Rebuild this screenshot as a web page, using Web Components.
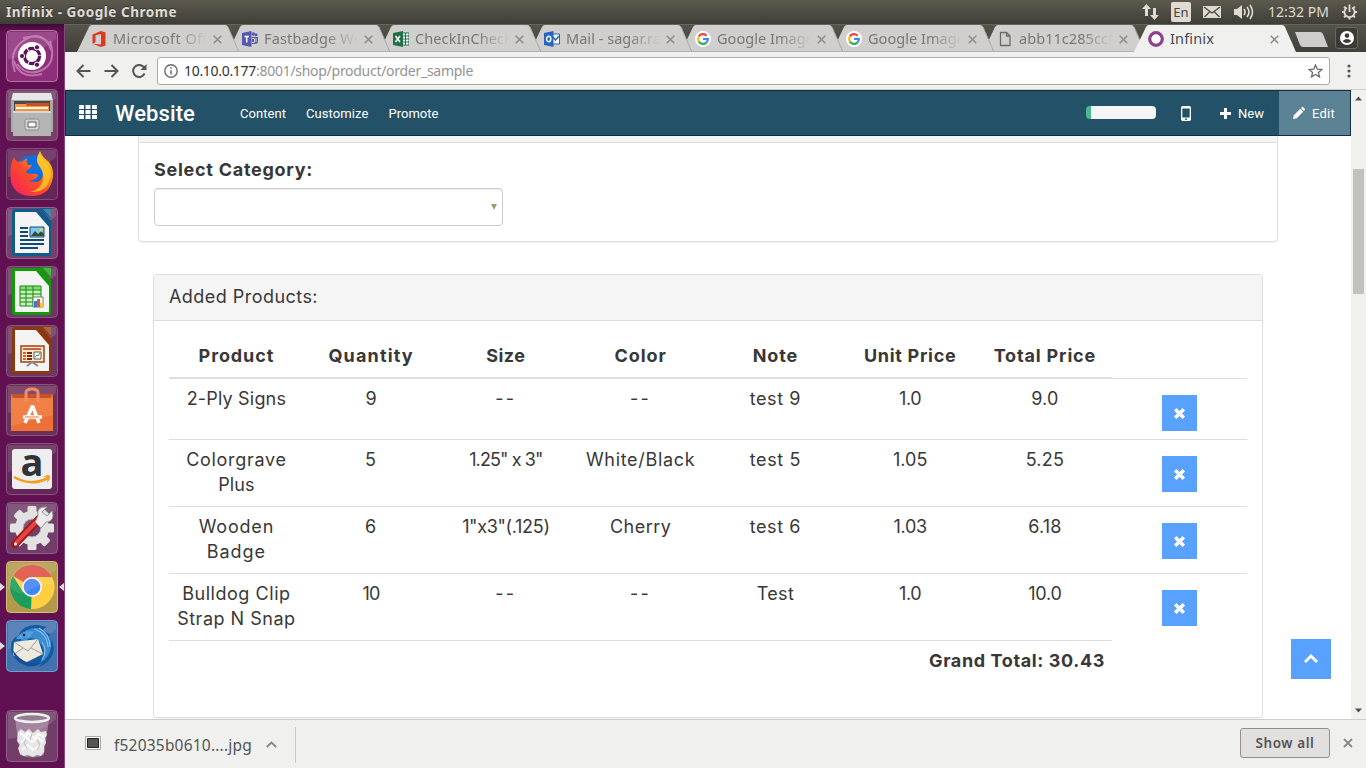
<!DOCTYPE html>
<html lang="en">
<head>
<meta charset="utf-8">
<title>Infinix - Google Chrome</title>
<style>
html,body{margin:0;padding:0;width:1366px;height:768px;overflow:hidden;background:#fff}
</style>
</head>
<body>
<desktop-screen></desktop-screen>
<script>
const make = (name, html, setup) => customElements.define(name, class extends HTMLElement {
  constructor() {
    super();
    const t = document.createElement('template');
    t.innerHTML = html;
    this.attachShadow({mode: 'open'}).append(t.content.cloneNode(true));
  }
  connectedCallback() { if (setup) setup(this, this.shadowRoot); }
});

make('desktop-screen', `
<style>
:host{display:flex;flex-direction:column;width:1366px;height:768px;overflow:hidden;font-family:"Noto Sans","Open Sans",sans-serif}
.body{display:flex;flex:1;min-height:0}
.win{flex:1;display:flex;flex-direction:column;min-width:0}
</style>
<system-bar></system-bar>
<div class="body">
  <app-launcher></app-launcher>
  <div class="win">
    <tab-strip></tab-strip>
    <nav-bar></nav-bar>
    <web-view></web-view>
    <download-shelf></download-shelf>
  </div>
</div>`);

make('system-bar', `
<style>
:host{display:flex;align-items:center;height:24px;box-sizing:border-box;padding:0 8px 0 6px;background:linear-gradient(#5b584d,#5a574d 8%,#403f39 95%,#3d3c36);color:#dfdbd2;font-size:14px;line-height:24px}
b{flex:1;font-size:13.5px;text-shadow:0 -1px #333}
.tray{display:flex;align-items:center}
svg{display:block}
.en{width:20px;height:20px;border-radius:2px;background:#dfdbd2;color:#45443d;line-height:21px;text-align:center;font-size:13px;margin:0 12px 0 11px}
</style>
<b><ui-fit w="171">Infinix - Google Chrome</ui-fit></b>
<div class="tray">
<svg width="19" height="18" viewBox="0 0 19 18" fill="#dfdbd2"><path d="M5.500 1l4.500 5H7v7H4V6H1zM13.500 17L9 12h3V5h3v7h3z"/></svg>
<span class="en">En</span>
<svg width="18" height="12"><path fill="#dfdbd2" d="M0 0h18v12H0z"/><path d="M1 1l8 6 8-6M1.500 11l5-5M16.500 11l-5-5" fill="none" stroke="#45443d" stroke-width="1.200"/></svg>
<svg style="margin-left:13px;margin-right:13px" width="21" height="16" viewBox="0 0 21 16"><path fill="#dfdbd2" d="M0 5h3l5-4v14l-5-4H0z"/><path d="M10 5q2 3 0 6M13 3q4 5 0 10M16 1q5 7 0 14" fill="none" stroke="#dfdbd2" stroke-width="1.600"/></svg>
<ui-fit w="61">12:32 PM</ui-fit>
<svg style="margin-left:12px" width="17" height="18" viewBox="-9 -9 18 18" fill="none" stroke="#dfdbd2"><path stroke-width="1.900" d="M-2.800-4.600A5.400 5.400 0 1 0 2.800-4.600M0-8V0"/><path stroke-width="2.200" d="M-4-4l-1.700-1.700M4-4l1.700-1.700M-5.500 0h-2.500M5.500 0h2.500M-4 4l-1.700 1.700M4 4l1.700 1.700M0 5.500v2.500"/></svg>
</div>`);

const gloss = (c1, c2) => `<rect x=".5" y=".5" width="51" height="51" rx="4" fill="${c1}" stroke="${c2}"/><path d="M2 2h48v7Q34 24 2 29z" fill="#fff" opacity=".13"/>`;
const doc = c => `<path d="M9 2h26l10 12v32q0 3-3 3H9q-3 0-3-3V5q0-3 3-3z" fill="${c}"/><path d="M9 5h21l13 15v26H9z" fill="#f4f4f4"/><path d="M34 1h11v11z" fill="${c}"/><path d="M37 2h8v9z" fill="#fff" opacity=".25"/>`;
const gear = (() => { let s = ''; for (let i = 0; i < 8; i++) s += `<rect x="-4.500" y="-22" width="9" height="9" rx="1.500" transform="rotate(${i * 45})"/>`; return s; })();
const apps = {
dash: gloss('#8e2f7a', '#b571a8') + `<path d="M9 42Q2 22 17 11T42 13M44 11q7 22-8 29T11 34M17 8q24-6 28 12M36 44Q14 50 8 31" fill="none" stroke="#d8a5cd" stroke-width="2" opacity=".6"/><circle cx="26" cy="26" r="14" fill="#fff"/><circle cx="26" cy="26" r="7.600" fill="none" stroke="#5e1352" stroke-width="3.200" stroke-dasharray="14.900 1"/><g fill="#5e1352" stroke="#fff" stroke-width="1"><circle cx="16" cy="26" r="2.600"/><circle cx="31" cy="17.300" r="2.600"/><circle cx="31" cy="34.700" r="2.600"/></g>`,
files: gloss('#744068', '#8c5b81') + `<path d="M7 4h38l2 8v31H5V12z" fill="#a9a9a9"/><path d="M7 4h38l1.500 7h-41z" fill="#e6e6e6"/><path d="M8 12h36v12H8z" fill="#4a4a4a"/><path d="M20 14h23v6H20z" fill="#c84f22"/><path d="M9 15h11l1 2h22v4H9z" fill="#f79540"/><path d="M10 18h32v2H10z" fill="#fff4dc"/><path d="M9 21h34v3H9z" fill="#ee9440"/><path d="M7 22h38v25H7z" fill="#b4b4b4"/><path d="M7 22h38v2H7z" fill="#d8d8d8"/><rect x="19" y="30" width="14" height="11" rx="2" fill="#d5d5d5" stroke="#8d8d8d"/><path d="M22 33h8v5h-8z" fill="#fff" stroke="#555"/>`,
firefox: gloss('#65265a', '#81507a') + `<defs><linearGradient id="ff" x1="0" y1="1" x2="1" y2="0"><stop stop-color="#f21c68"/><stop offset=".45" stop-color="#ff4b28"/><stop offset=".75" stop-color="#ffa11c"/><stop offset="1" stop-color="#ffee28"/></linearGradient></defs><circle cx="26" cy="24" r="17" fill="#136fe0"/><path d="M14 27q7 8 14 8l8-5v7l-12 7-10-8z" fill="#143b9c"/><path d="M8 9q1 4 5 5 5-1 8-4-1 5 1 7h4q-1 3-6 6 0 3 6 3 5-1 6 1-2 6-10 5 9 5 14-2 3-6-2-11-6-6 0-16 2 6 9 11 5 7 4 15-3 19-21 19Q9 48 5 34 3 18 8 9z" fill="url(#ff)"/><path d="M34 4q-6 8 0 15 8 13-3 22-3 2-7 3 16 1 20-13 2-9-3-15-6-6-7-12z" fill="#ffd02a" opacity=".75"/>`,
writer: gloss('#74406c', '#90658a') + doc('#0d5c8e') + `<g stroke="#104b74" stroke-width="2"><path d="M14 21h8M14 25h8M14 29h8M14 33h24M14 37h24M14 41h18"/></g><path d="M24 20h14v10H24z" fill="#7dc8f2" stroke="#104b74"/><path d="M25 29l4-5 3 3 3-3 3 3v2z" fill="#354d32"/><circle cx="35" cy="23" r="1.500" fill="#fad72e"/>`,
calc: gloss('#6b3863', '#86577d') + doc('#129a0b') + `<path d="M14 20h21v20H14z" fill="#c9f3bd"/><path d="M14 20h21v4H14z" fill="#7de275"/><path d="M14 20h21v20H14zM14 24h21M14 28h21M14 32h21M14 36h21M20 20v20M27 20v20" fill="none" stroke="#17860f"/><path d="M27 31h10v10H27z" fill="#fff" stroke="#777"/><path d="M28 35h3v6h-3z" fill="#2a80d4"/><path d="M31 33h3v8h-3z" fill="#e2572d"/><path d="M34 37h3v4h-3z" fill="#f7c72b"/>`,
impress: gloss('#6b3863', '#86577d') + doc('#8d370d') + `<path d="M15 21h23v16H15z" fill="#ffe8d4" stroke="#9d4111" stroke-width="1.500"/><path d="M17 24h18" stroke="#d5602a" stroke-width="2"/><path d="M17 28h3M17 31h3M17 34h3" stroke="#d5602a" stroke-width="2"/><path d="M21 28h5M21 31h5M21 34h5" stroke="#763008" stroke-width="2"/><path d="M28 27h7v7h-7z" fill="#fff" stroke="#555"/><path d="M29 32l2-2 1 1 2-3" fill="none" stroke="#27a829"/><path d="M21 41l5-4 6 4" fill="none" stroke="#888" stroke-width="2"/>`,
store: gloss('#6b3159', '#86577d') + `<path d="M5 10l5 3h32l5-3v37H5z" fill="#ed7136"/><path d="M5 10h42l-3 4H8z" fill="#c8522b"/><path d="M5 14h42v17L5 42z" fill="#f48b51" opacity=".6"/><path d="M20 18V9q0-4 6-4t6 4v9" fill="none" stroke="#f08e67" stroke-width="3"/><path d="M19 39l7-16h1l6 16M17 33h19" fill="none" stroke="#fff" stroke-width="3.500"/><path d="M19 33h14" stroke="#ed7136"/>`,
amazon: gloss('#65265a', '#86577d') + `<rect x="6" y="6" width="40" height="40" rx="3" fill="#eee"/><text x="26" y="33" text-anchor="middle" font-family="Open Sans" font-weight="700" font-size="38" fill="#30343a">a</text><path d="M8 34q17 10 34 1" fill="none" stroke="#f79b1f" stroke-width="2.600"/><path d="M37 34q7-4 7 0 0 3-3 6 1-5 0-6z" fill="#f79b1f"/>`,
settings: gloss('#703e68', '#8f6288') + `<g transform="translate(26 26)"><g fill="#e2e2e2">${gear}</g><circle r="13" fill="none" stroke="#e2e2e2" stroke-width="8"/><circle r="9" fill="none" stroke="#bbb"/></g><path d="M9 42L35 15" stroke="#a81717" stroke-width="8" stroke-linecap="round"/><path d="M10 41L29 21" stroke="#e34444" stroke-width="4" stroke-linecap="round"/><path d="M29 20l6 6 5-6q6 0 7-6l-1-5-5 5-5-4 5-5q-11-1-9 9z" fill="#ececec" stroke="#999"/><circle cx="9.500" cy="42" r="1.500" fill="#fff"/>`,
chrome: gloss('#b39a4b', '#d2bf81') + `<circle cx="26" cy="26" r="22" fill="#ffcf42"/><path d="M26 26L7 15A22 22 0 0 1 46 16H26z" fill="#de5246"/><path d="M26 26l-9 5L7 15a22 22 0 0 0 18 33z" fill="#1c9d5b"/><path d="M26 16h20a22 22 0 0 1-21 32l10-17z" fill="#ffcf42"/><circle cx="26" cy="26" r="10" fill="#f3f3f3"/><circle cx="26" cy="26" r="8.300" fill="#4286f4"/><path d="M4 26A22 22 0 0 1 48 23Q30 23 22 30T4 26z" fill="#fff" opacity=".1"/>`,
mail: gloss('#4272b0', '#789cc9') + `<path d="M12 16Q17 4 32 5l9 2q-3 1-4 3l8 5-3 1q5 5 6 13-2 13-15 18l3-4q-10 6-18 2Q4 39 5 25q1-7 7-9z" fill="#15599f"/><path d="M12 17q9-10 21-9 9 4 12 14 1 14-11 21 6-9 3-16-5-8-11-9-5 0-6 4l-7 2 3-6q-3 0-4-1z" fill="#3a8bcf"/><path d="M8 22l24-3 5 15-18 9L7 35z" fill="#eee9df"/><path d="M8 22l14 9 10-12M7 35l10-7M37 34l-12-6" fill="none" stroke="#a69e96"/><path d="M28 9q13 4 14 18M33 8q11 6 11 19M36 22q6 8 0 18" fill="none" stroke="#82bfe9" stroke-width="1.200"/><path d="M10 19q5-8 14-8l4 1-5 6q-4-2-7 1z" fill="#51a0dd"/><circle cx="18" cy="15" r="1.300" fill="#151b2b"/><path d="M6 29q3 13 16 17 8 0 12-3-17 3-28-14z" fill="#174e8f"/>`,
trash: gloss('#703e68', '#8f6288') + `<path d="M9 9l5 36q12 5 24 0l5-36z" fill="#c7b4c5" opacity=".5"/><path d="M12 22l3-3 4 3 4-3 4 4 5-4 3 3 5-1 1 4-2 3 1 5-2 3v6l-3 4-4-1-4 2-5-2-4 1-4-2-2-6 2-3-3-4z" fill="#e6e6e6"/><path d="M14 23l5 4 3-4 6 5 5-4 5 3M15 32l6-4 5 4 6-4 5 4M16 40l6-5 5 5 8-5" fill="none" stroke="#fff" stroke-width="2"/><path d="M20 29l-2 4 3 5M31 29l3 6-3 5M26 24l-2 6" fill="none" stroke="#bbb" stroke-width="1"/><ellipse cx="26" cy="8" rx="17" ry="4" fill="#917e92" stroke="#f0f0f0" stroke-width="2.500"/>`
};
make('launcher-tile', `<style>:host{display:flex;align-items:center;height:52px;width:65px;position:relative}svg.i{margin-left:6px;overflow:visible;display:block}.l,.r{position:absolute;top:22px;width:0;height:0;border:4px solid transparent}.l{left:0;border-left:5px solid #ddd;border-right:0}.r{right:1px;border-right:5px solid #ddd;border-left:0}</style><svg class="i" width="52" height="52" viewBox="0 0 52 52"></svg>`, (h, r) => {
  r.querySelector('svg').innerHTML = apps[h.getAttribute('app')];
  for (const side of (h.getAttribute('marks') || '')) { const s = document.createElement('span'); s.className = side; r.append(s); }
});
make('app-launcher', `<style>:host{display:flex;flex-direction:column;gap:7px;width:65px;box-sizing:border-box;padding:6px 0;background:linear-gradient(#3d0b35,#611152 8px,#611152);box-shadow:inset -1px 0 #86457c}.t{margin-top:auto}</style>
${Object.keys(apps).map(a => `<launcher-tile app="${a}" ${a === 'chrome' ? 'marks="lr"' : a === 'mail' ? 'marks="l"' : ''} ${a === 'trash' ? 'class="t"' : ''}></launcher-tile>`).join('')}`);

make('browser-tab', `
<style>
:host{display:flex;position:relative;width:162px;height:28px;margin-right:-11px;flex:none;color:#777;font-size:14.500px;align-items:center;box-sizing:border-box;padding:2px 0 0 14px}
.bg{position:absolute;inset:0}
.ic,.tx,.x{position:relative;display:block}
.ic{width:16px;height:16px}
.tx{margin-left:6px;width:94px;white-space:nowrap;overflow:hidden;line-height:24px;margin-top:-2px;-webkit-mask:linear-gradient(90deg,#000 66%,transparent)}
:host([active]){color:#46494f}
:host([active]) .tx{-webkit-mask:none}
.x{margin-left:6px}
</style>
<svg class="bg" width="162" height="28"><path id="p" d="M0 28L12 3q1-2 3-2h133q2 0 3 2l11 25z" fill="#d0cfce"/><path id="s" d="M151 3l11 25" stroke="#aaa9a7" fill="none"/><path id="b" d="M0 27.500h162" stroke="#b2b1af"/></svg>
<span class="ic"><slot name="icon"></slot></span><span class="tx"><slot></slot></span>
<svg class="x" width="9" height="9"><path d="M.7.700l7.600 7.600M8.300.700L.700 8.300" stroke="#8b8b8b" stroke-width="1.500"/></svg>`, (h, r) => {
  if (h.hasAttribute('active')) { r.getElementById('p').setAttribute('fill', '#f0f0ef'); r.getElementById('s').remove(); r.getElementById('b').remove(); }
});
const svg16 = s => `<svg slot="icon" width="16" height="16" viewBox="0 0 16 16" style="display:block">${s}</svg>`;
const G = svg16(`<circle cx="8" cy="8" r="8" fill="#fff"/><g fill="none" stroke-width="2.200"><path d="M11.600 4.700A4.900 4.900 0 0 0 3.800 5.500" stroke="#ea4335"/><path d="M3.800 5.500a4.900 4.900 0 0 0 0 5" stroke="#fbbc05"/><path d="M3.800 10.500a4.900 4.900 0 0 0 7.600 1.100" stroke="#34a853"/><path d="M11.400 11.600A4.900 4.900 0 0 0 12.900 8H8" stroke="#4285f4"/></g>`);
const tabs = [
[svg16('<path d="M1.500 3.500L10 0l4.500 1.500v13L10 16l-8.500-3.300L10 13.500V3L4.500 4.200v7l-3 1.500z" fill="#d8391f"/>'), 'Microsoft Off', 95],
[svg16('<path d="M0 2l9.500-2v16L0 14z" fill="#5558af"/><path d="M2.500 5.500h4.500M4.700 5.500v6" stroke="#fff" stroke-width="1.500"/><circle cx="14" cy="3.800" r="1.500" fill="#5558af"/><circle cx="11.300" cy="3" r="1.700" fill="#5558af"/><path d="M10 6h6v4q0 3-3 3h-3z" fill="#5558af"/><path d="M10 7.500h2.500v4H10M14 7v4" fill="none" stroke="#d0cfce"/>'), 'Fastbadge We', 98],
[svg16('<path d="M9 2h7v12H9z" fill="#fff" stroke="#1f7244"/><path d="M9 5h7M9 8h7M9 11h7M12.500 2v12" stroke="#1f7244"/><path d="M0 2l10-2v16L0 14z" fill="#1f7244"/><path d="M2.500 5l4.500 6M7 5l-4.500 6" stroke="#fff" stroke-width="1.500"/>'), 'CheckInCheck', 97],
[svg16('<path d="M8 3h7.500v10H8z" fill="#fff" stroke="#2567bf"/><path d="M9 6l2.500 3L15 5" fill="none" stroke="#2567bf" stroke-width="1.500"/><path d="M0 2l9.500-2v16L0 14z" fill="#2567bf"/><ellipse cx="4.700" cy="8" rx="2.100" ry="2.700" fill="none" stroke="#fff" stroke-width="1.500"/>'), 'Mail - sagar.ra', 95],
[G, 'Google Image', 97], [G, 'Google Image', 97],
[svg16('<path d="M3.500 1.500h6l3.500 3.500v9.500H3.500zM9.500 1.500V5H13" fill="none" stroke="#6a6a6a" stroke-width="1.300"/>'), 'abb11c285ccf', 94]];
make('tab-strip', `
<style>:host{display:flex;height:28px;box-sizing:border-box;padding-left:12px;background:linear-gradient(#67655a 0 1px,#55534a 1px,#403f39);align-items:flex-start}
.nt{margin:8px 0 0 9px;flex:none}.u{margin:3px 0 0 7px;width:23px;height:22px;box-sizing:border-box;border:1px solid #69675e;border-radius:3px;background:#3b3a34;display:grid;place-items:center}</style>
${tabs.map((t, i) => `<browser-tab style="z-index:${8 - i}">${t[0]}<ui-fit w="${t[2]}">${t[1]}</ui-fit></browser-tab>`).join('')}
<browser-tab active style="z-index:9">${svg16('<circle cx="8" cy="8" r="6.300" fill="#fff" stroke="#8f408b" stroke-width="3.200"/>')}<ui-fit w="44">Infinix</ui-fit></browser-tab>
<svg class="nt" style="margin-left:10px" width="33" height="15"><path d="M0 0h25q2 0 3 2l5 13H8q-2 0-3-2z" fill="#cfcdcb"/></svg>
<span class="u"><svg width="14" height="14"><circle cx="7" cy="7" r="7" fill="#fff"/><circle cx="7" cy="4.600" r="2.300" fill="#3b3a34"/><path d="M2.600 10q4.400-4 8.800 0-4.400 4-8.800 0z" fill="#3b3a34"/></svg></span>`);

make('nav-bar', `
<style>:host{display:flex;align-items:center;height:38px;box-sizing:border-box;background:#f0f0ef;border-bottom:1px solid #cfcfca;padding:1px 0 1px 11px;font-size:14px}
.n{display:flex;gap:13px;width:81px;flex:none}
.o{box-sizing:border-box;width:1173px;height:28px;border:1px solid #aaa;border-radius:3px;background:#fff;display:flex;align-items:center;padding:0 6px;color:#939393;font-size:14px;line-height:26px}
.o i{font-style:normal;color:#333}
.o .s{margin-left:auto}
.a{margin-left:6px;display:inline-block;white-space:nowrap}.d{margin-left:17px}</style>
<div class="n"><svg width="15" height="14"><path d="M14.500 7H1.500M7.500 1l-6 6 6 6" fill="none" stroke="#555" stroke-width="2"/></svg>
<svg width="15" height="14"><path d="M.500 7h13M7.500 1l6 6-6 6" fill="none" stroke="#555" stroke-width="2"/></svg>
<svg width="15" height="14"><path d="M12.600 9.500A6 6 0 1 1 11.500 2.800l1 1" fill="none" stroke="#555" stroke-width="2"/><path d="M14.500 0v6h-6z" fill="#555"/></svg></div>
<div class="o"><svg width="14" height="14"><circle cx="7" cy="7" r="6.200" fill="none" stroke="#6c6c6c" stroke-width="1.400"/><path d="M7 6.200v4.300M7 3.300v1.500" stroke="#6c6c6c" stroke-width="1.500"/></svg>
<span class="a"><ui-fit w="72"><i>10.10.0.177</i></ui-fit><ui-fit w="217">:8001/shop/product/order_sample</ui-fit></span>
<svg class="s" width="15" height="14" viewBox="0 0 15 14"><path d="M7.500 1l1.800 4.200 4.600.3-3.500 3 1.100 4.400-4-2.400-4 2.400 1.100-4.400-3.500-3 4.600-.3z" fill="none" stroke="#6d6d6d" stroke-width="1.300"/></svg></div>
<svg class="d" width="4" height="14" fill="#555"><circle cx="2" cy="2" r="1.600"/><circle cx="2" cy="7" r="1.600"/><circle cx="2" cy="12" r="1.600"/></svg>`);

make('site-header', `
<style>:host{display:flex;align-items:center;height:46px;flex:none;box-sizing:border-box;background:#235168;border:1px solid #142f3c;color:#fff;font:13px/20px Roboto,sans-serif;padding-left:13px}
h1{font:500 22px/44px Roboto,sans-serif;margin:1px 45px 0 18px;width:80px;white-space:nowrap;height:43px}
nav{display:flex;gap:20px;padding-top:2px}
.pr{margin-left:auto;width:70px;height:13px;border-radius:4px;background:linear-gradient(90deg,#47b896 5px,#f5f5f5 5px);margin-top:-2px}
.ph{margin-left:25px}.nw{display:flex;align-items:center;margin-left:29px;gap:7px}
.nw ui-fit,.ed ui-fit{padding-top:2px}
.ed{display:flex;align-items:center;gap:7px;box-sizing:border-box;width:71px;height:44px;margin-left:15px;padding-left:14px;background:#5a8294}</style>
<svg width="18" height="14" fill="#fff" style="margin-top:-2px">${[0, 5, 10].map(y => [0, 6.5, 13].map(x => `<rect x="${x}" y="${y}" width="5" height="4" rx=".6"/>`).join('')).join('')}</svg>
<h1><ui-fit w="80">Website</ui-fit></h1>
<nav><ui-fit w="46">Content</ui-fit><ui-fit w="62.500">Customize</ui-fit><ui-fit w="50">Promote</ui-fit></nav>
<div class="pr"></div>
<svg class="ph" width="10" height="15"><rect width="10" height="15" rx="1.800" fill="#fff"/><path d="M1.300 2.500h7.400v9H1.300z" fill="#235168"/><circle cx="5" cy="13.200" r=".9" fill="#235168"/></svg>
<span class="nw"><svg width="11" height="11"><path d="M5.500 0v11M0 5.500h11" stroke="#fff" stroke-width="3"/></svg><ui-fit w="26">New</ui-fit></span>
<span class="ed"><svg width="12" height="12" viewBox="0 0 12 12"><path d="M0 12l.8-3.700L7.300 1.800l2.900 2.900-6.500 6.500zM8 1.100L9 .2q.7-.4 1.300.1l1.400 1.400q.5.600.1 1.300l-.9 1z" fill="#fff"/></svg><ui-fit w="23">Edit</ui-fit></span>`);

make('x-button', `<style>:host{display:grid;place-items:center;width:35px;height:36px;background:#58a1ff}</style><svg width="13" height="13"><path d="M2.200 2.200l8.600 8.600M10.800 2.200l-8.600 8.600" stroke="#fff" stroke-width="3.500"/></svg>`);

make('product-row', `
<style>:host{display:grid;grid-template-columns:repeat(8,134.75px);height:var(--h,67px)}
.c{border-bottom:1px solid #ddd;box-sizing:border-box;padding:7px 7.500px 0;text-align:center;line-height:25px;white-space:nowrap}
:host([last]) .b{border-bottom-color:transparent}
.c.b{padding:16px 0 0 50px}
:host([head]){font-weight:700}
:host([head]) .c{border-bottom-width:2px}
:host([head]) .b{border-bottom-width:1px}</style>`, (h, r) => {
  JSON.parse(h.dataset.cells).forEach(lines => {
    const c = document.createElement('div'); c.className = 'c';
    for (let i = 0; i < lines.length; i += 2) {
      const d = document.createElement('div'), f = document.createElement('ui-fit');
      f.setAttribute('w', lines[i + 1] + 1.5); f.textContent = lines[i]; d.append(f); c.append(d);
    }
    r.append(c);
  });
  const b = document.createElement('div'); b.className = 'c b';
  if (!h.hasAttribute('head')) b.append(document.createElement('x-button'));
  r.append(b);
});
const row = (attrs, cells) => `<product-row ${attrs} data-cells='${JSON.stringify(cells).replace(/'/g, '&#39;')}'></product-row>`;

make('ui-panel', `<style>:host{display:block;box-sizing:border-box;border:1px solid #ddd;border-radius:4px;background:#fff;box-shadow:0 1px 1px rgba(0,0,0,.05)}
.h{height:45px;line-height:44px;background:#f5f5f5;border-bottom:1px solid #ddd;padding-left:15px;border-radius:3px 3px 0 0}.b{padding:15px}</style><div class="h"><slot name="head"></slot></div><div class="b"><slot></slot></div>`);

make('web-page', `
<style>:host{display:flex;flex-direction:column;width:1286px;height:629px;overflow:hidden;background:#fff;color:#383838;font:18px/25px Inter,sans-serif;position:relative}
.clip{flex:1;overflow:hidden}
.p1{width:1140px;height:146px;margin:-40px 0 0 73px}
.p2{width:1110px;height:444px;margin:32px 0 0 88px}
.lab{display:block;font-weight:700;margin-top:-1px;height:31px}
.sel{width:349px;height:38px;box-sizing:border-box;border:1px solid #ccc;border-radius:4px;box-shadow:inset 0 1px 1px rgba(0,0,0,.075);display:flex;align-items:center;justify-content:flex-end;padding-right:5px}
.gt{width:936px;text-align:right;font-weight:700;padding-top:7px;height:25px}
.up{position:absolute;right:20px;bottom:40px;width:40px;height:40px;background:#58a1ff;display:grid;place-items:center}</style>
<site-header></site-header>
<div class="clip">
<ui-panel class="p1"><span class="lab"><ui-fit w="159">Select Category:</ui-fit></span><div class="sel"><svg width="6" height="6"><path d="M0 0h6L3 6z" fill="#a09c7a"/></svg></div></ui-panel>
<ui-panel class="p2"><ui-fit slot="head" w="149">Added Products:</ui-fit>
${row('head style="--h:43px"', [['Product', 74], ['Quantity', 84], ['Size', 38], ['Color', 51], ['Note', 44], ['Unit Price', 91], ['Total Price', 101]])}
${row('style="--h:61px"', [['2-Ply Signs', 98], ['9', 10], ['--', 20], ['--', 20], ['test 9', 50], ['1.0', 21], ['9.0', 26]])}
${row('', [['Colorgrave', 99, 'Plus', 35], ['5', 11], ['1.25" x 3"', 72], ['White/Black', 108], ['test 5', 50], ['1.05', 33], ['5.25', 37]])}
${row('', [['Wooden', 74, 'Badge', 58], ['6', 11], ['1"x3"(.125)', 86], ['Cherry', 60], ['test 6', 50], ['1.03', 32], ['6.18', 32]])}
${row('last', [['Bulldog Clip', 107, 'Strap N Snap', 117], ['10', 16], ['--', 20], ['--', 20], ['Test', 36], ['1.0', 21], ['10.0', 32]])}
<div class="gt"><ui-fit w="176">Grand Total: 30.43</ui-fit></div></ui-panel>
</div>
<div class="up"><svg width="16" height="12"><path d="M2 9l6-6 6 6" fill="none" stroke="#fff" stroke-width="3"/></svg></div>`);

make('web-view', `
<style>:host{display:flex;height:629px;flex:none}
.sb{width:15px;box-sizing:border-box;background:#f1f1f0;display:flex;flex-direction:column;align-items:center;padding:6px 0 6px}
.th{width:11px;height:125px;background:#c1c1c0;margin:68px 0 auto}</style>
<web-page></web-page><div class="sb"><svg width="7" height="5"><path d="M0 4.500h7L3.500.500z" fill="#505050"/></svg><div class="th"></div><svg width="7" height="5"><path d="M0 .500h7l-3.500 4z" fill="#505050"/></svg></div>`);

make('download-shelf', `
<style>:host{display:flex;align-items:center;height:49px;box-sizing:border-box;background:#f0f0ee;border-top:1px solid #cfcfcd;color:#555;padding-left:20px;font-size:15.500px;line-height:24px}
.f{width:211px;height:36px;box-sizing:border-box;border-right:1px solid #c8c8c6;display:flex;align-items:center;margin-top:1px}
.f ui-fit{margin:0 14px 0 13px}
.btn{margin-left:auto;width:90px;height:30px;box-sizing:border-box;border:1px solid #8f8f8c;border-radius:3px;background:#e2e0de;display:grid;place-items:center;font-size:13.500px;font-weight:600;line-height:26px;margin-top:-2px}
.x{margin:-2px 13px 0}</style>
<div class="f"><svg width="16" height="14" style="margin-top:-4px"><path d="M.500.500h15v13H.500z" fill="#fff" stroke="#aaa"/><path d="M2.500 2.500h11v9h-11z" fill="#555" stroke="#222"/></svg><ui-fit w="138">f52035b0610....jpg</ui-fit><svg width="11" height="7"><path d="M.800 6L5.500 1.500 10.200 6" fill="none" stroke="#888" stroke-width="1.900"/></svg></div>
<div class="btn"><ui-fit w="59">Show all</ui-fit></div><svg class="x" width="10" height="10"><path d="M1 1l8 8M9 1L1 9" stroke="#888" stroke-width="1.800"/></svg>`);

/* Inline text whose tracking is adjusted so that it fills a given width. */
make('ui-fit', `<style>:host{display:inline-block;white-space:pre}</style><slot></slot>`, h => {
  const n = h.textContent.length, w = +h.getAttribute('w');
  h.style.letterSpacing = '0px';
  h.style.letterSpacing = ((w - h.getBoundingClientRect().width) / n).toFixed(3) + 'px';
});
</script>
</body>
</html>
